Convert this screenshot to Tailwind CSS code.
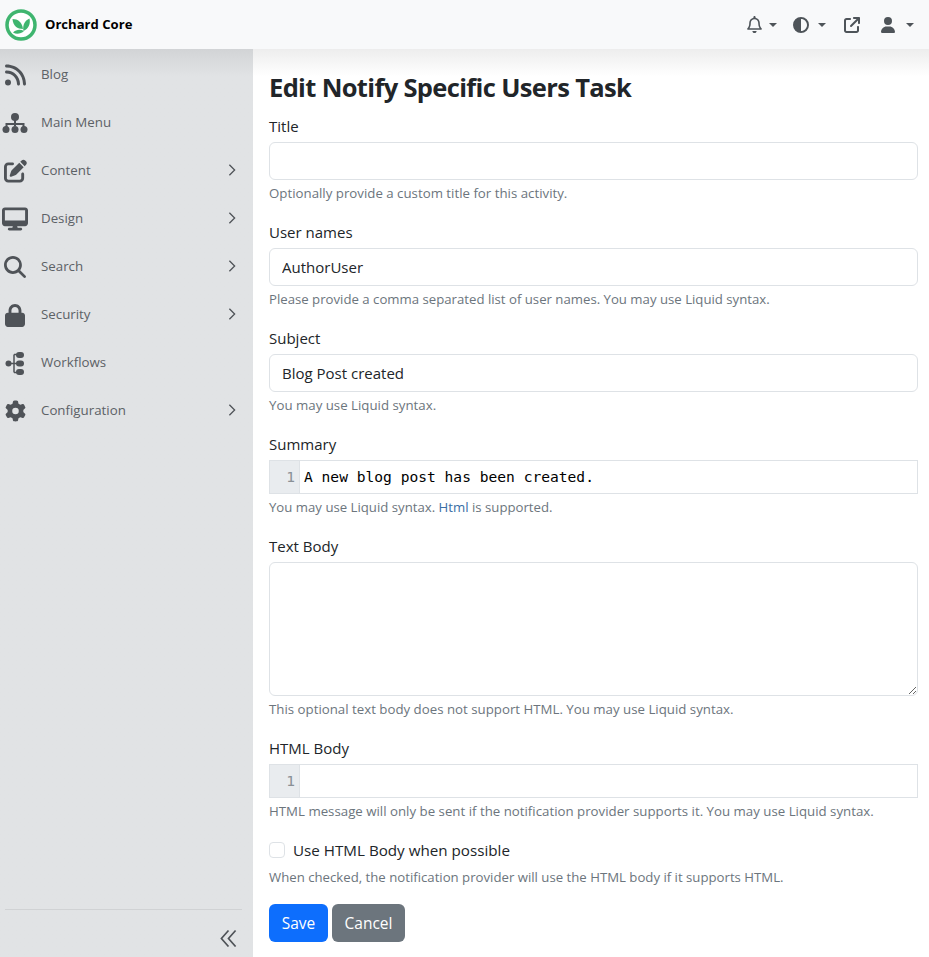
<!DOCTYPE html>
<html lang="en">
<head>
    <meta charset="UTF-8">
    <title>Edit Notify Specific Users Task</title>
    <script src="https://cdn.jsdelivr.net/npm/@tailwindcss/browser@4"></script>
</head>
<body class="h-[957px] overflow-hidden bg-white text-[#212529] font-['Open_Sans','Noto_Sans',sans-serif] text-[15px]">
    <!-- top bar -->
    <header class="relative z-10 h-[49px] bg-[#f8f9fa] flex items-center justify-between">
        <a href="#" class="flex items-center pl-[5px] gap-[8px]">
            <svg viewBox="0 0 32 32" class="w-8 h-8">
                <circle cx="16" cy="16" r="14" fill="#fff" stroke="#3fb56f" stroke-width="3.500"/>
                <path d="M7.500 10c5.500 0 9.500 3 10.500 10-5.500 0-10-3-10.500-10z" fill="#3fb56f"/>
                <path d="M24.500 9.500c1.200 5.500-1 10.500-6 12.500-1.200-5.500 1-10.500 6-12.500z" fill="#3fb56f"/>
                <path d="M8 23.500c3-3.200 7.500-3.700 11-1.500-3 2.800-7.500 3.700-11 1.500z" fill="#3fb56f"/>
            </svg>
            <span class="font-bold text-[13.1px] text-black">Orchard Core</span>
        </a>
        <nav class="flex items-center text-[#4e5459] pr-[15px]">
            <svg viewBox="0 0 448 512" class="w-[15px] h-[17px] fill-current"><path d="M224 0c-17.700 0-32 14.300-32 32V51.200C119 66 64 130.600 64 208v25.400c0 45.400-15.500 89.500-43.800 124.900L5.300 377c-5.800 7.200-6.900 17.100-2.900 25.400S14.800 416 24 416H424c9.200 0 17.600-5.300 21.600-13.600s2.900-18.200-2.900-25.400l-14.900-18.600C399.500 322.900 384 278.800 384 233.400V208c0-77.400-55-142-128-156.800V32c0-17.700-14.300-32-32-32zm0 96c61.900 0 112 50.100 112 112v25.400c0 47.900 13.900 94.600 39.700 134.600H72.300C98.100 328 112 281.300 112 233.400V208c0-61.900 50.100-112 112-112zm64 352H224 160c0 17 6.700 33.300 18.700 45.300s28.300 18.700 45.300 18.700s33.300-6.700 45.300-18.700s18.700-28.300 18.700-45.300z"/></svg>
            <span class="ml-[7px] w-0 h-0 border-x-[4px] border-x-transparent border-t-[4px] border-t-[#4e5459]"></span>
            <svg viewBox="0 0 512 512" class="ml-[16px] w-4 h-4 fill-current"><path d="M448 256c0-106-86-192-192-192V448c106 0 192-86 192-192zM0 256a256 256 0 1 1 512 0A256 256 0 1 1 0 256z"/></svg>
            <span class="ml-[9px] w-0 h-0 border-x-[4px] border-x-transparent border-t-[4px] border-t-[#4e5459]"></span>
            <svg viewBox="0 0 512 512" class="ml-[18px] w-4 h-4 fill-current"><path d="M320 0c-17.700 0-32 14.300-32 32s14.300 32 32 32h82.700L201.400 265.400c-12.500 12.500-12.500 32.800 0 45.300s32.800 12.500 45.300 0L448 109.300V192c0 17.700 14.300 32 32 32s32-14.300 32-32V32c0-17.700-14.300-32-32-32H320zM80 32C35.800 32 0 67.800 0 112V432c0 44.200 35.800 80 80 80H400c44.200 0 80-35.800 80-80V320c0-17.700-14.300-32-32-32s-32 14.300-32 32V432c0 8.800-7.200 16-16 16H80c-8.800 0-16-7.200-16-16V112c0-8.800 7.200-16 16-16H192c17.700 0 32-14.300 32-32s-14.300-32-32-32H80z"/></svg>
            <svg viewBox="0 0 448 512" class="ml-[21px] w-[14px] h-4 fill-current"><path d="M224 256A128 128 0 1 0 224 0a128 128 0 1 0 0 256zm-45.700 48C79.800 304 0 383.800 0 482.300C0 498.700 13.300 512 29.700 512H418.300c16.400 0 29.700-13.300 29.700-29.700C448 383.800 368.200 304 269.700 304H178.300z"/></svg>
            <span class="ml-[11px] w-0 h-0 border-x-[4px] border-x-transparent border-t-[4px] border-t-[#4e5459]"></span>
        </nav>
    </header>

    <div class="flex h-[908px]">
        <!-- sidebar -->
        <aside class="w-[253px] shrink-0 flex flex-col text-[#5c6166] text-[13.3px] pt-[2px] bg-linear-to-b from-[#d2d4d6] to-[#e1e3e5] to-[3%]">
            <a href="#" class="h-12 flex items-center">
                <span class="w-[41px] flex justify-center pr-[11px]"><svg viewBox="0 0 448 512" class="w-[21px] h-6 fill-[#4f5358]"><path d="M0 64C0 46.300 14.300 32 32 32c229.800 0 416 186.200 416 416c0 17.700-14.300 32-32 32s-32-14.300-32-32C384 253.600 226.400 96 32 96C14.300 96 0 81.700 0 64zM0 416a64 64 0 1 1 128 0A64 64 0 1 1 0 416zM32 160c159.100 0 288 128.900 288 288c0 17.700-14.300 32-32 32s-32-14.300-32-32c0-123.700-100.300-224-224-224c-17.700 0-32-14.300-32-32s14.300-32 32-32z"/></svg></span>
                <span>Blog</span>
            </a>
            <a href="#" class="h-12 flex items-center">
                <span class="w-[41px] flex justify-center pr-[11px]"><svg viewBox="0 0 26 24" class="w-[26px] h-6"><path d="M13 6V15M4.500 18V13H21.500V18" fill="none" stroke="#4f5358" stroke-width="2"/><circle cx="13" cy="6" r="4" fill="#4f5358"/><circle cx="4" cy="18.500" r="3.500" fill="#4f5358"/><circle cx="13" cy="18.500" r="3.500" fill="#4f5358"/><circle cx="22" cy="18.500" r="3.500" fill="#4f5358"/></svg></span>
                <span>Main Menu</span>
            </a>
            <a href="#" class="h-12 flex items-center">
                <span class="w-[41px] flex justify-center pr-[11px]"><svg viewBox="0 0 512 512" class="w-[23px] h-6 fill-[#4f5358]"><path d="M471.600 21.700c-21.900-21.900-57.300-21.900-79.200 0L362.300 51.700l97.900 97.900 30.100-30.100c21.900-21.900 21.900-57.300 0-79.200L471.600 21.700zm-299.200 220c-6.100 6.100-10.800 13.600-13.500 21.900l-29.600 88.800c-2.900 8.600-.6 18.100 5.800 24.600s15.900 8.700 24.600 5.800l88.800-29.600c8.200-2.700 15.700-7.400 21.900-13.500L437.700 172.300 339.700 74.300 172.400 241.700zM96 64C43 64 0 107 0 160V416c0 53 43 96 96 96H352c53 0 96-43 96-96V320c0-17.700-14.300-32-32-32s-32 14.300-32 32v96c0 17.700-14.300 32-32 32H96c-17.700 0-32-14.300-32-32V160c0-17.700 14.300-32 32-32h96c17.700 0 32-14.300 32-32s-14.300-32-32-32H96z"/></svg></span>
                <span>Content</span>
                <svg viewBox="0 0 16 16" class="ml-auto mr-[14px] mb-[2px] w-[14px] h-[14px] stroke-[#4f5358] fill-none stroke-[1.500]"><path d="M5 2l6 6-6 6"/></svg>
            </a>
            <a href="#" class="h-12 flex items-center">
                <span class="w-[41px] flex justify-center pr-[11px]"><svg viewBox="0 0 576 512" class="w-[26px] h-6 fill-[#4f5358]"><path d="M64 0C28.700 0 0 28.700 0 64V352c0 35.300 28.700 64 64 64H240l-10.700 32H160c-17.700 0-32 14.300-32 32s14.300 32 32 32H416c17.700 0 32-14.300 32-32s-14.300-32-32-32H346.700L336 416H512c35.300 0 64-28.700 64-64V64c0-35.300-28.700-64-64-64H64zM512 64V288H64V64H512z"/></svg></span>
                <span>Design</span>
                <svg viewBox="0 0 16 16" class="ml-auto mr-[14px] mb-[2px] w-[14px] h-[14px] stroke-[#4f5358] fill-none stroke-[1.500]"><path d="M5 2l6 6-6 6"/></svg>
            </a>
            <a href="#" class="h-12 flex items-center">
                <span class="w-[41px] flex justify-center pr-[11px]"><svg viewBox="0 0 512 512" class="w-[22px] h-[22px] fill-[#4f5358]"><path d="M416 208c0 45.900-14.900 88.300-40 122.700L502.600 457.400c12.500 12.500 12.500 32.800 0 45.300s-32.800 12.500-45.300 0L330.700 376c-34.400 25.200-76.800 40-122.700 40C93.100 416 0 322.900 0 208S93.100 0 208 0S416 93.100 416 208zM208 352a144 144 0 1 0 0-288 144 144 0 1 0 0 288z"/></svg></span>
                <span>Search</span>
                <svg viewBox="0 0 16 16" class="ml-auto mr-[14px] mb-[2px] w-[14px] h-[14px] stroke-[#4f5358] fill-none stroke-[1.500]"><path d="M5 2l6 6-6 6"/></svg>
            </a>
            <a href="#" class="h-12 flex items-center">
                <span class="w-[41px] flex justify-center pr-[11px]"><svg viewBox="0 0 448 512" class="w-[20px] h-[23px] fill-[#4f5358]"><path d="M144 144v48H304V144c0-44.200-35.800-80-80-80s-80 35.800-80 80zM80 192V144C80 64.500 144.500 0 224 0s144 64.500 144 144v48h16c35.300 0 64 28.700 64 64V448c0 35.300-28.700 64-64 64H64c-35.300 0-64-28.700-64-64V256c0-35.300 28.700-64 64-64H80z"/></svg></span>
                <span>Security</span>
                <svg viewBox="0 0 16 16" class="ml-auto mr-[14px] mb-[2px] w-[14px] h-[14px] stroke-[#4f5358] fill-none stroke-[1.500]"><path d="M5 2l6 6-6 6"/></svg>
            </a>
            <a href="#" class="h-12 flex items-center">
                <span class="w-[41px] flex justify-center pr-[11px]"><svg viewBox="0 0 20 25" class="w-[20px] h-[25px]"><path d="M3 12.500H14M9 3.500V21.500M9 3.500H15M9 21.500H15" fill="none" stroke="#4f5358" stroke-width="1.500"/><circle cx="3.500" cy="12.500" r="3" fill="#4f5358"/><rect x="11" y="1" width="8" height="6" rx="3" fill="#4f5358"/><rect x="11" y="9.500" width="8" height="6" rx="3" fill="#4f5358"/><rect x="11" y="18" width="8" height="6" rx="3" fill="#4f5358"/></svg></span>
                <span>Workflows</span>
            </a>
            <a href="#" class="h-12 flex items-center">
                <span class="w-[41px] flex justify-center pr-[11px]"><svg viewBox="0 0 512 512" class="w-[21px] h-[22px] fill-[#4f5358]"><path d="M495.900 166.600c3.200 8.700 .5 18.400-6.400 24.600l-43.300 39.400c1.100 8.300 1.700 16.800 1.700 25.400s-.6 17.100-1.700 25.400l43.300 39.400c6.900 6.200 9.600 15.900 6.400 24.600c-4.400 11.900-9.700 23.300-15.800 34.300l-4.700 8.100c-6.600 11-14 21.400-22.100 31.200c-5.900 7.200-15.700 9.600-24.500 6.800l-55.700-17.700c-13.400 10.300-28.200 18.900-44 25.400l-12.500 57.100c-2 9.100-9 16.300-18.200 17.800c-13.800 2.300-28 3.500-42.500 3.500s-28.700-1.200-42.500-3.500c-9.200-1.500-16.200-8.700-18.200-17.800l-12.500-57.100c-15.800-6.500-30.600-15.100-44-25.400L83.100 425.900c-8.800 2.800-18.600 .3-24.500-6.800c-8.100-9.800-15.500-20.200-22.100-31.200l-4.700-8.100c-6.100-11-11.400-22.400-15.800-34.300c-3.200-8.700-.5-18.400 6.400-24.600l43.300-39.400C64.600 273.100 64 264.600 64 256s.6-17.100 1.700-25.400L22.400 191.200c-6.900-6.200-9.600-15.900-6.400-24.600c4.400-11.900 9.700-23.300 15.800-34.300l4.700-8.100c6.600-11 14-21.400 22.100-31.200c5.900-7.200 15.700-9.600 24.500-6.800l55.700 17.700c13.400-10.300 28.200-18.900 44-25.400l12.500-57.100c2-9.100 9-16.300 18.200-17.800C227.300 1.200 241.500 0 256 0s28.700 1.200 42.500 3.500c9.200 1.500 16.200 8.700 18.200 17.800l12.500 57.100c15.800 6.500 30.600 15.100 44 25.400l55.700-17.700c8.800-2.800 18.600-.3 24.500 6.800c8.100 9.800 15.500 20.200 22.100 31.200l4.700 8.100c6.100 11 11.400 22.400 15.800 34.300zM256 336a80 80 0 1 0 0-160 80 80 0 1 0 0 160z"/></svg></span>
                <span>Configuration</span>
                <svg viewBox="0 0 16 16" class="ml-auto mr-[14px] mb-[2px] w-[14px] h-[14px] stroke-[#4f5358] fill-none stroke-[1.500]"><path d="M5 2l6 6-6 6"/></svg>
            </a>
            <div class="mt-auto mx-[5px] mr-[11px] h-[48px] border-t border-[#d0d2d4] flex items-center justify-end pr-[5px] pt-[8px]">
                <svg viewBox="0 0 18 18" class="w-[17px] h-[18px] stroke-[#4f5358] fill-none stroke-[1.800]"><path d="M9 1L1.500 9.500 9 18M16.500 1L9 9.500 16.500 18"/></svg>
            </div>
        </aside>

        <!-- form -->
        <main class="flex-1 pl-4 pr-[11px] pt-[20px] bg-linear-to-b from-[#ededed] to-white to-[3%]">
            <h1 class="font-bold text-[25.5px] leading-[36px] tracking-[-0.65px] mb-[9px] text-[#212529]">Edit Notify Specific Users Task</h1>

            <div class="mb-4">
                <label class="block h-6 leading-6 mb-1">Title</label>
                <input type="text" class="block w-full h-[38px] border border-[#dee2e6] rounded-md px-3 bg-white">
                <p class="mt-[3px] h-[21px] leading-[21px] text-[13.27px] text-[#6c757d]">Optionally provide a custom title for this activity.</p>
            </div>

            <div class="mb-4">
                <label class="block h-6 leading-6 mb-1">User names</label>
                <input type="text" value="AuthorUser" class="block w-full h-[38px] border border-[#dee2e6] rounded-md px-3 bg-white">
                <p class="mt-[3px] h-[21px] leading-[21px] text-[13.2px] text-[#6c757d]">Please provide a comma separated list of user names. You may use Liquid syntax.</p>
            </div>

            <div class="mb-4">
                <label class="block h-6 leading-6 mb-1">Subject</label>
                <input type="text" value="Blog Post created" class="block w-full h-[38px] border border-[#dee2e6] rounded-md px-3 bg-white">
                <p class="mt-[3px] h-[21px] leading-[21px] text-[13.27px] text-[#6c757d]">You may use Liquid syntax.</p>
            </div>

            <div class="mb-4">
                <label class="block h-6 leading-6 mb-1">Summary</label>
                <div class="flex h-[34px] border border-[#dee2e6]">
                    <span class="w-[30px] bg-[#e9ecef] border-r border-[#dee2e6] text-right pr-[4px] leading-[32px] text-[#8a9096] font-['DejaVu_Sans_Mono',monospace] text-[14.6px]">1</span>
                    <span class="pl-[4px] leading-[32px] text-black font-['DejaVu_Sans_Mono',monospace] text-[14.6px]">A new blog post has been created.</span>
                </div>
                <p class="mt-[3px] h-[21px] leading-[21px] text-[13.2px] text-[#6c757d]">You may use Liquid syntax. <a href="#" class="text-[#3a6ea5]">Html</a> is supported.</p>
            </div>

            <div class="mb-4">
                <label class="block h-6 leading-6 mb-1">Text Body</label>
                <textarea class="block w-full h-[134px] border border-[#dee2e6] rounded-md px-3 bg-white"></textarea>
                <p class="mt-[3px] h-[21px] leading-[21px] text-[13.27px] text-[#6c757d]">This optional text body does not support HTML. You may use Liquid syntax.</p>
            </div>

            <div class="mb-4">
                <label class="block h-6 leading-6 mb-1">HTML Body</label>
                <div class="flex h-[34px] border border-[#dee2e6]">
                    <span class="w-[30px] bg-[#e9ecef] border-r border-[#dee2e6] text-right pr-[4px] leading-[32px] text-[#8a9096] font-['DejaVu_Sans_Mono',monospace] text-[14.6px]">1</span>
                </div>
                <p class="mt-[3px] h-[21px] leading-[21px] text-[13.27px] text-[#6c757d]">HTML message will only be sent if the notification provider supports it. You may use Liquid syntax.</p>
            </div>

            <label class="flex items-center h-6 gap-2 text-[15.2px]">
                <span class="w-4 h-4 border border-[#dee2e6] rounded bg-white"></span>
                <span>Use HTML Body when possible</span>
            </label>
            <p class="mt-[5px] h-[21px] leading-[21px] text-[13.2px] text-[#6c757d]">When checked, the notification provider will use the HTML body if it supports HTML.</p>

            <div class="flex gap-1 mt-4">
                <button class="h-[38px] w-[59px] pt-px bg-[#0d6efd] text-white rounded-md text-[15.5px]">Save</button>
                <button class="h-[38px] w-[73px] pt-px bg-[#6c757d] text-white rounded-md text-[15.5px]">Cancel</button>
            </div>
        </main>
    </div>
</body>
</html>
